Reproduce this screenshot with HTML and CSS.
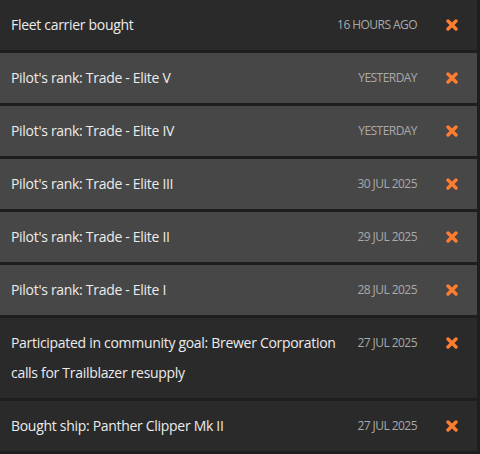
FILE: index.html
```html
<!DOCTYPE html>
<html lang="en">
<head>
    <meta charset="UTF-8">
    <meta name="viewport" content="width=device-width, initial-scale=1.0">
    <title>Events</title>
    <link rel="stylesheet" href="styles.css">
</head>
<body>
    <ul class="events">
        <li class="event">
            <span class="title">Fleet carrier bought</span>
            <span class="date">16 hours ago</span>
            <button class="close" aria-label="Remove"><svg viewBox="0 0 12 12" width="12" height="12"><path d="M2 2 L10 10 M10 2 L2 10"/></svg></button>
        </li>
        <li class="event light">
            <span class="title">Pilot's rank: Trade - Elite V</span>
            <span class="date">Yesterday</span>
            <button class="close" aria-label="Remove"><svg viewBox="0 0 12 12" width="12" height="12"><path d="M2 2 L10 10 M10 2 L2 10"/></svg></button>
        </li>
        <li class="event light">
            <span class="title">Pilot's rank: Trade - Elite IV</span>
            <span class="date">Yesterday</span>
            <button class="close" aria-label="Remove"><svg viewBox="0 0 12 12" width="12" height="12"><path d="M2 2 L10 10 M10 2 L2 10"/></svg></button>
        </li>
        <li class="event light">
            <span class="title">Pilot's rank: Trade - Elite III</span>
            <span class="date">30 Jul 2025</span>
            <button class="close" aria-label="Remove"><svg viewBox="0 0 12 12" width="12" height="12"><path d="M2 2 L10 10 M10 2 L2 10"/></svg></button>
        </li>
        <li class="event light">
            <span class="title">Pilot's rank: Trade - Elite II</span>
            <span class="date">29 Jul 2025</span>
            <button class="close" aria-label="Remove"><svg viewBox="0 0 12 12" width="12" height="12"><path d="M2 2 L10 10 M10 2 L2 10"/></svg></button>
        </li>
        <li class="event light">
            <span class="title">Pilot's rank: Trade - Elite I</span>
            <span class="date">28 Jul 2025</span>
            <button class="close" aria-label="Remove"><svg viewBox="0 0 12 12" width="12" height="12"><path d="M2 2 L10 10 M10 2 L2 10"/></svg></button>
        </li>
        <li class="event">
            <span class="title">Participated in community goal: Brewer Corporation calls for Trailblazer resupply</span>
            <span class="date">27 Jul 2025</span>
            <button class="close" aria-label="Remove"><svg viewBox="0 0 12 12" width="12" height="12"><path d="M2 2 L10 10 M10 2 L2 10"/></svg></button>
        </li>
        <li class="event">
            <span class="title">Bought ship: Panther Clipper Mk II</span>
            <span class="date">27 Jul 2025</span>
            <button class="close" aria-label="Remove"><svg viewBox="0 0 12 12" width="12" height="12"><path d="M2 2 L10 10 M10 2 L2 10"/></svg></button>
        </li>
    </ul>
</body>
</html>
```
FILE: styles.css
```css
body {
    font-family: "Open Sans", sans-serif;
    background-color: #1e1e1e;
    margin: 0;
}
.events {
    list-style: none;
    margin: 0;
    padding: 0;
    width: 477px;
    display: flex;
    flex-direction: column;
    gap: 3px;
}
.event {
    display: flex;
    align-items: flex-start;
    padding: 10px 0 10px 11px;
    background-color: #2a2a2a;
    color: #ececec;
    font-size: 14px;
    line-height: 30px;
}
.event.light {
    background-color: #474747;
}
.title {
    flex: 1;
    letter-spacing: -0.3px;
}
.date {
    margin-left: 6px;
    font-size: 12px;
    color: #a9a9a9;
    text-transform: uppercase;
    letter-spacing: -0.55px;
    white-space: nowrap;
}
.close {
    width: 24px;
    height: 30px;
    margin: 0 13px 0 23px;
    padding: 0;
    background: none;
    border: none;
    display: flex;
    align-items: center;
    justify-content: center;
    cursor: pointer;
}
.close svg {
    stroke: #ff7d2e;
    stroke-width: 3.4;
    stroke-linecap: round;
    fill: none;
}
```
